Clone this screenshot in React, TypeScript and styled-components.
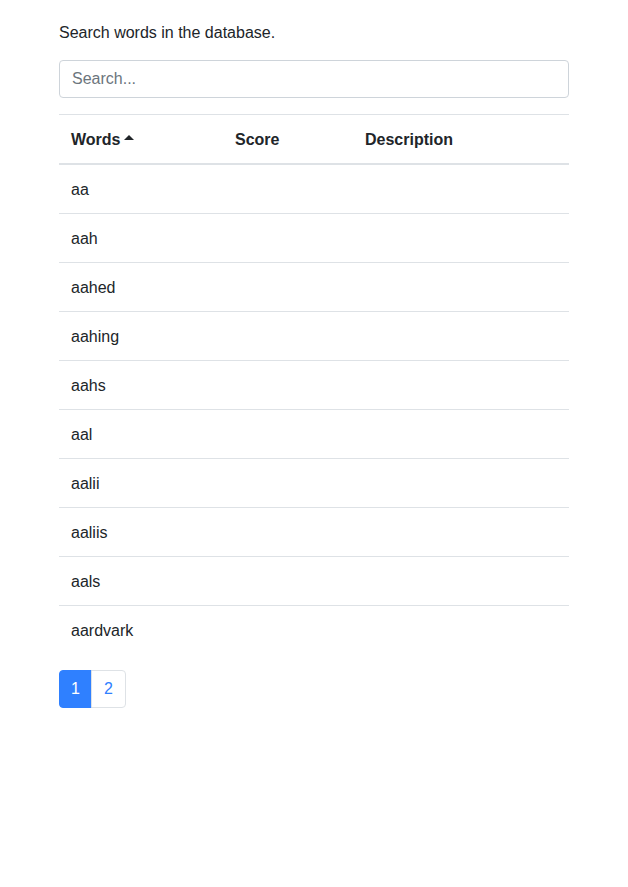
import React from "react";
import styled, { createGlobalStyle } from "styled-components";

const Global = createGlobalStyle`
  html, body { margin: 0; padding: 0; background: #fff; }
  body {
    font-family: "Liberation Sans", Arial, sans-serif;
    font-size: 16px;
    line-height: 1.5;
    color: #212529;
  }
  * { box-sizing: border-box; }
`;

const Container = styled.div`
  width: 540px;
  margin: 0 auto;
  padding: 21px 15px 20px;
`;

const Intro = styled.p`
  margin: 0 0 15px;
`;

const SearchInput = styled.input`
  display: block;
  width: 100%;
  height: 38px;
  padding: 6px 12px;
  font: inherit;
  color: #495057;
  border: 1px solid #ced4da;
  border-radius: 4px;
  margin-bottom: 16px;
  outline: none;
  &::placeholder { color: #6c757d; }
`;

const Table = styled.table`
  width: 100%;
  border-collapse: collapse;
  margin-bottom: 16px;
`;

const Th = styled.th<{ $w: number }>`
  width: ${(p) => p.$w}px;
  text-align: left;
  font-weight: 700;
  padding: 13px 12px 11px;
  border-top: 1px solid #dee2e6;
  border-bottom: 2px solid #dee2e6;
  vertical-align: bottom;
`;

const Td = styled.td`
  padding: 13px 12px 11px;
  border-top: 1px solid #dee2e6;
`;

const Caret = styled.span`
  display: inline-block;
  width: 0;
  height: 0;
  margin-left: 4px;
  vertical-align: 5px;
  border-left: 5px solid transparent;
  border-right: 5px solid transparent;
  border-bottom: 5px solid #212529;
`;

const Pagination = styled.ul`
  display: flex;
  list-style: none;
  margin: 0;
  padding: 0;
`;

const PageLink = styled.a<{ $active?: boolean; $w: number }>`
  display: block;
  width: ${(p) => p.$w}px;
  height: 38px;
  padding: 8px 0;
  line-height: 20px;
  text-align: center;
  border: 1px solid ${(p) => (p.$active ? "#2f80ff" : "#dee2e6")};
  background: ${(p) => (p.$active ? "#2f80ff" : "#fff")};
  color: ${(p) => (p.$active ? "#fff" : "#2f80ff")};
  text-decoration: none;
  margin-left: -1px;
  li:first-child & {
    margin-left: 0;
    border-radius: 4px 0 0 4px;
  }
  li:last-child & {
    border-radius: 0 4px 4px 0;
  }
`;

const words = ["aa", "aah", "aahed", "aahing", "aahs", "aal", "aalii", "aaliis", "aals", "aardvark"];

export default function App() {
  return (
    <>
      <Global />
      <Container>
        <Intro>Search words in the database.</Intro>
        <SearchInput placeholder="Search..." />
        <Table>
          <thead>
            <tr>
              <Th $w={164}>
                Words<Caret />
              </Th>
              <Th $w={130}>Score</Th>
              <Th $w={216}>Description</Th>
            </tr>
          </thead>
          <tbody>
            {words.map((w) => (
              <tr key={w}>
                <Td>{w}</Td>
                <Td></Td>
                <Td></Td>
              </tr>
            ))}
          </tbody>
        </Table>
        <Pagination>
          <li>
            <PageLink $active $w={33}>1</PageLink>
          </li>
          <li>
            <PageLink $w={35}>2</PageLink>
          </li>
        </Pagination>
      </Container>
    </>
  );
}
